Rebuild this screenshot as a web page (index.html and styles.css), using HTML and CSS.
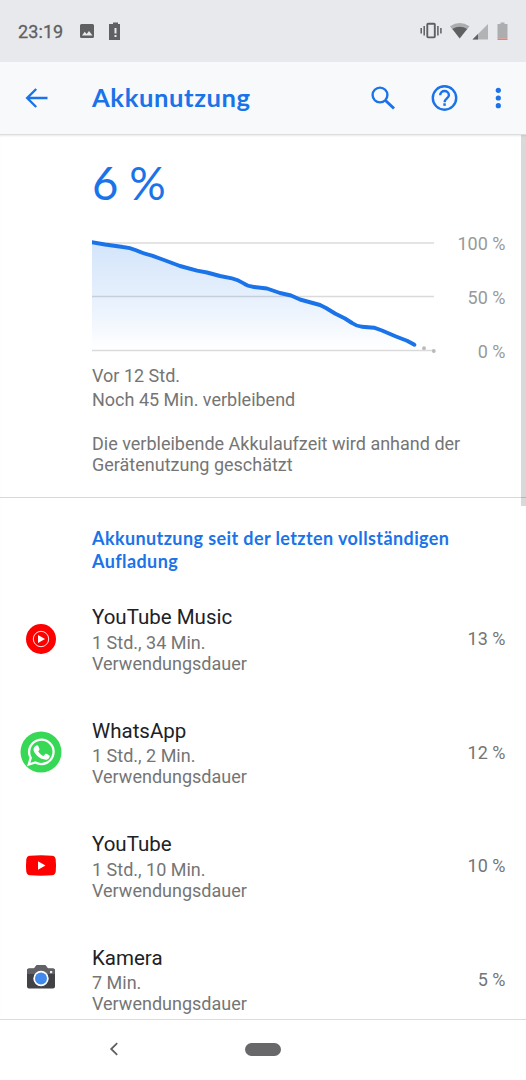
FILE: index.html
```html
<!DOCTYPE html>
<html lang="de">
<head>
<meta charset="utf-8">
<title>Akkunutzung</title>
<link rel="stylesheet" href="styles.css">
</head>
<body>
<div class="phone">
  <header class="status">
    <span class="clock">23:19</span>
    <svg class="status-left" width="46" height="22" viewBox="0 0 46 22">
      <path fill="#5f6062" fill-rule="evenodd" d="M3.500 4h11a1.500 1.500 0 0 1 1.500 1.500v11a1.500 1.500 0 0 1-1.500 1.500h-11A1.500 1.500 0 0 1 2 16.500v-11A1.500 1.500 0 0 1 3.500 4zM4 15.500h10.500l-3.500-4.500-2.300 3-2-2.300z"/>
      <path fill="#5f6062" fill-rule="evenodd" d="M35 2.500h5v1.500h2v16H31V4h4zM36.500 8v5.500h2V8zM36.500 15v2h2v-2z"/>
    </svg>
    <svg class="status-right" width="90" height="22" viewBox="0 0 90 22">
      <g fill="none" stroke="#5f6062" stroke-width="1.500"><rect x="7.300" y="3.700" width="7.500" height="13.700" rx=".8" stroke-width="1.900"/><path d="M4.200 6v9.500M1.200 8v5.500M17.900 6v9.500M20.900 8v5.500"/></g>
      <path fill="#acadaf" d="M30 6.200Q39.700-.4 49.500 6.200L47 9.400H32.500z"/>
      <path fill="#5f6062" d="M32.300 9Q39.700 4.500 47.200 9L39.700 18.500z"/>
      <path fill="#b2b3b5" d="M68 4v15.500H52.500z"/><path fill="#5f6062" d="M58 14v5.500H52.500z"/>
      <path fill="#acadaf" d="M80.500 2.500h4V4h3v14.500h-10V4h3z"/><path fill="#e98075" d="M77.500 18.500h10V20h-10z"/>
    </svg>
  </header>
  <div class="toolbar">
    <svg class="back" width="24" height="22" viewBox="0 0 24 22"><path d="M22.500 11H2M11.200 2L2.200 11l9 9" fill="none" stroke="#1a73e8" stroke-width="2.400"/></svg>
    <h1 class="title">Akkunutzung</h1>
    <svg class="actions" width="136" height="30" viewBox="0 0 136 30">
      <g fill="none" stroke="#1a73e8">
        <circle cx="10" cy="12" r="7.400" stroke-width="2.400"/><path d="M15.500 17.500l8.500 8" stroke-width="3"/>
        <circle cx="74.500" cy="15" r="11.700" stroke-width="2.400"/>
        <path d="M70.200 12.200c0-5.600 8.700-5.600 8.700 0 0 3-4.300 3.400-4.300 7" stroke-width="2.400"/>
      </g>
      <g fill="#1a73e8"><path d="M73.300 20.300h2.500v2.500h-2.500z"/><circle cx="128.300" cy="7.300" r="2.600"/><circle cx="128.300" cy="15" r="2.600"/><circle cx="128.300" cy="22.700" r="2.600"/></g>
    </svg>
  </div>
  <main class="content">
    <section class="summary">
      <div class="level">6 %</div>
      <div class="graph">
        <svg class="curve" width="346" height="124" viewBox="92 234 346 124">
          <defs><linearGradient id="fade" x1="0" y1="242" x2="0" y2="350" gradientUnits="userSpaceOnUse"><stop offset="0" stop-color="#1a73e8" stop-opacity=".19"/><stop offset=".5" stop-color="#1a73e8" stop-opacity=".11"/><stop offset="1" stop-color="#1a73e8" stop-opacity="0"/></linearGradient></defs>
          <path d="M92 243H434" stroke="#e4e4e4" stroke-width="2"/>
          <path d="M92 296.500H434M92 350.500H434" stroke="#dadada" stroke-width="1.300"/>
          <path fill="url(#fade)" d="M92 242L105 244.500 128 248 141 252 164 260 180 266 197 271 220 276 239 281 248 285.500 267 288.500 280 293 291 295.500 300 299.500 321 305.500 335 313.500 345 318.500 357 325.500 374 328 396 337 407 341 415 345V350H92z"/>
          <path fill="none" stroke="#1a73e8" stroke-width="3.900" stroke-linejoin="round" d="M91 242L105 244.500 123 247Q130 247.500 136 250.300T152 255.600L164 260 180 266 197 270.700 207 272.500 220 276 232 278.300Q238 279.500 243 283T254 287L267 288.500 280 293 291 295.500 300 299.500 320 305 326 308 335 313.500 345 318.500 352 323Q357 326.500 362 326.700L374 327.700 382 330.500 396 336.500 407 340.700 414.500 344.700"/>
          <circle cx="414.500" cy="344.800" r="1.900" fill="#1a73e8"/>
          <circle cx="424" cy="348.200" r="1.900" fill="#b9babb"/><circle cx="433.800" cy="351" r="1.900" fill="#b9babb"/>
        </svg>
        <div class="scale"><span>100 %</span><span>50 %</span><span>0 %</span></div>
      </div>
      <p class="text since">Vor 12 Std.</p>
      <p class="text left">Noch 45 Min. verbleibend</p>
      <p class="text hint">Die verbleibende Akkulaufzeit wird anhand der<br>Gerätenutzung geschätzt</p>
    </section>
    <h2 class="heading">Akkunutzung seit der letzten vollständigen<br>Aufladung</h2>
    <ul class="apps">
      <li class="app">
        <svg class="icon" width="42" height="42" viewBox="0 0 42 42"><circle cx="21" cy="21" r="15" fill="red"/><circle cx="21" cy="21" r="7.700" fill="none" stroke="#fff" stroke-width=".9"/><path d="M18 17l7 4-7 4z" fill="#fff"/></svg>
        <div class="details"><h3 class="name">YouTube Music</h3><p class="text">1 Std., 34 Min.<br>Verwendungsdauer</p></div><span class="share">13 %</span>
      </li>
      <li class="app">
        <svg class="icon" width="42" height="42" viewBox="0 0 42 42"><circle cx="21" cy="21" r="20.500" fill="#37d855"/><path d="M8.700 33.500l2-6.700a12.200 12.200 0 1 1 4.700 4.700z" fill="none" stroke="#fff" stroke-width="2.300"/><path fill="#fff" d="M16.500 14.400c.7-.2 1.500 0 1.800.7l1.200 2.800c.2.700-.4 1.400-1.300 2.300 1.200 2.200 2.900 3.700 5.300 4.800l1.700-2c.4-.4.8-.4 1.300-.2l2.700 1.400c.7.400.5 1.500.2 2.200-.7 1.700-3 2.600-4.800 2.200-5.200-1-8.800-4.300-10.700-8.300-1-2.200-.2-5 2.600-5.900z"/></svg>
        <div class="details"><h3 class="name">WhatsApp</h3><p class="text">1 Std., 2 Min.<br>Verwendungsdauer</p></div><span class="share">12 %</span>
      </li>
      <li class="app">
        <svg class="icon" width="42" height="42" viewBox="0 0 42 42"><path fill="red" d="M10 10.700Q21 9.900 32 10.700 35.300 11 35.700 14.500 36.300 20.500 35.700 26.500 35.300 30 32 30.300 21 31.100 10 30.300 6.700 30 6.300 26.500 5.700 20.500 6.300 14.500 6.700 11 10 10.700z"/><path d="M18 16.300l7.500 4.200-7.500 4.200z" fill="#fff"/></svg>
        <div class="details"><h3 class="name">YouTube</h3><p class="text">1 Std., 10 Min.<br>Verwendungsdauer</p></div><span class="share">10 %</span>
      </li>
      <li class="app">
        <svg class="icon" width="42" height="42" viewBox="0 1 42 42"><path fill="#424246" d="M9 11.500h5l2.400-3.100q.4-.4 1-.4h7.200q.6 0 1 .4l2.400 3.100h5q2 0 2 2v16q0 2-2 2H9q-2 0-2-2v-16q0-2 2-2z"/><path fill="#626266" d="M9 11.500h5l2.400-3.100q.4-.4 1-.4h7.200q.6 0 1 .4l2.400 3.100h5q2 0 2 2V17H7v-3.500q0-2 2-2z"/><circle cx="21" cy="21.500" r="7.700" fill="#fff"/><circle cx="21" cy="21.500" r="6" fill="#4289ed"/><path fill="#eee" d="M30 14h2.200v2.200H30z"/></svg>
        <div class="details"><h3 class="name">Kamera</h3><p class="text">7 Min.<br>Verwendungsdauer</p></div><span class="share">5 %</span>
      </li>
    </ul>
    <div class="scrollbar"></div>
  </main>
  <nav class="navigation">
    <svg class="nav-back" width="10" height="14" viewBox="0 0 10 14"><path d="M8.200 1.200L2.200 7l6 5.800" fill="none" stroke="#5f6062" stroke-width="1.800"/></svg>
    <div class="pill"></div>
  </nav>
</div>
</body>
</html>
```
FILE: styles.css
```css
* { box-sizing: border-box; }
body, h1, h2, h3, p, ul { margin: 0; padding: 0; }
body { background: #fff; font-family: Roboto, sans-serif; }
svg { display: block; flex: none; }
.phone { width: 526px; height: 1080px; display: flex; flex-direction: column; overflow: hidden; }

.status { flex: none; height: 62px; display: flex; align-items: center; background: #e8e9ec; color: #5f6062; padding: 0 16px 0 18px; }
.clock { width: 60px; font-size: 18px; line-height: 22px; letter-spacing: .1px; -webkit-text-stroke: .3px #5f6062; padding-top: 1px; }
.status-right { margin-left: auto; }

.toolbar { flex: none; height: 72px; display: flex; align-items: center; background: #f8f9fb; padding: 0 20px 0 25px; }
.title { margin-left: 43px; padding-bottom: 2px; font: 700 25.600px/32px Lato, sans-serif; letter-spacing: .6px; color: #1a73e8; white-space: nowrap; }
.actions { margin-left: auto; }

.content { position: relative; flex: 1; min-height: 0; overflow: hidden; border-top: 1px solid #dcdddf; box-shadow: inset 0 2px 2px -1px #e8e9ea; }
.summary { height: 363px; padding: 23px 20.500px 0 92px; border-bottom: 1px solid #d8d8d8; }
.level { height: 50px; font: 400 45.500px/50px Lato, sans-serif; letter-spacing: -.4px; color: #1a73e8; white-space: pre; }
.graph { display: flex; justify-content: space-between; height: 124px; margin-top: 26px; }
.scale { display: flex; flex-direction: column; gap: 33px; margin-top: -1px; text-align: right; color: #999; font-size: 18px; line-height: 21px; }
.text { font-size: 18px; line-height: 21px; color: #757575; white-space: nowrap; }
.since { margin-top: 7px; }
.left { margin-top: 3px; }
.hint { margin-top: 23px; }

.heading { height: 84px; padding: 29px 0 0 92px; font: 700 18px/23px Lato, sans-serif; letter-spacing: .4px; color: #1a73e8; white-space: nowrap; }
.apps { list-style: none; }
.app { height: 113.500px; display: flex; align-items: center; padding: 0 20.500px 0 20px; }
.details { margin-left: 30px; padding-top: 1px; }
.name { font-size: 20.500px; font-weight: 400; line-height: 24px; color: #202124; margin-bottom: 2.500px; }
.share { margin-left: auto; font-size: 18px; line-height: 21px; color: #757575; }
.scrollbar { position: absolute; top: 0; right: 0; width: 5px; height: 371px; background: rgba(0, 0, 0, .15); }

.navigation { flex: none; height: 61px; display: grid; grid-template-columns: 10px 36px; column-gap: 126px; align-items: center; padding: 0 0 2px 109px; border-top: 1px solid #dcdcdc; background: #fff; }
.pill { width: 36px; height: 13px; border-radius: 7px; background: #68686a; }
```
